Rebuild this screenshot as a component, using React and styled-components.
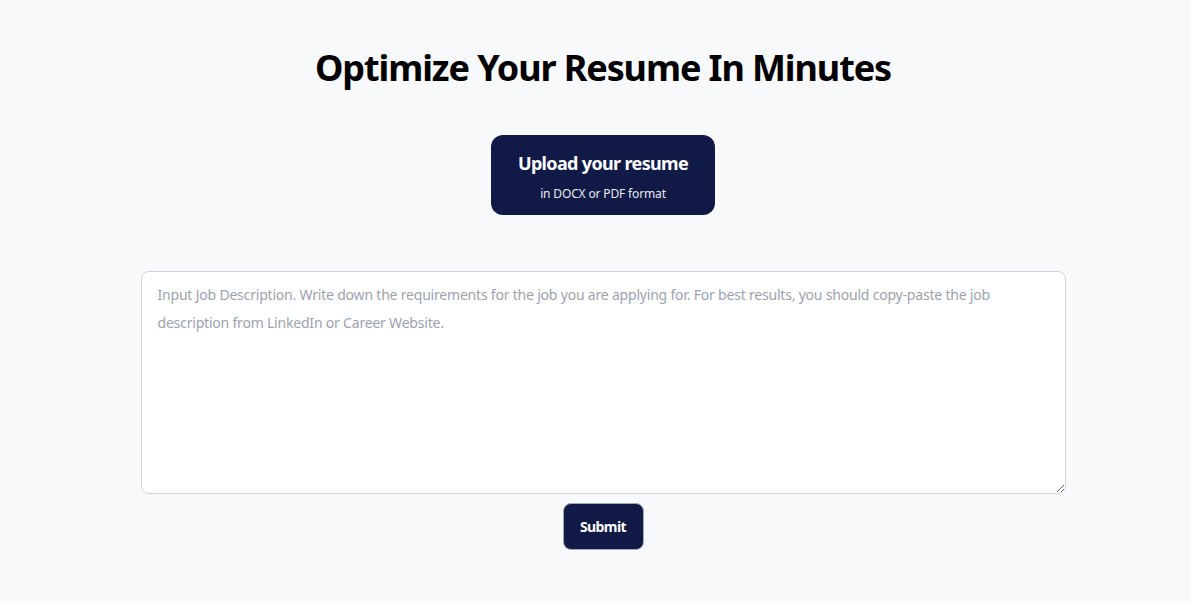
import React from "react";
import styled, { createGlobalStyle } from "styled-components";

const Global = createGlobalStyle`
  html, body { margin: 0; padding: 0; background: #f8f9fb; }
  body { font-family: "Noto Sans", "Open Sans", sans-serif; }
  * { box-sizing: border-box; }
`;

const Page = styled.main`
  display: flex;
  flex-direction: column;
  align-items: center;
  padding: 44px 0 40px 15px;
  min-height: 601px;
`;

const Title = styled.h1`
  margin: 0;
  font-size: 36px;
  line-height: 48px;
  font-weight: 700;
  color: #000;
  letter-spacing: -1.1px;
`;

const UploadButton = styled.button`
  margin-top: 43px;
  width: 224px;
  height: 80px;
  padding-top: 4px;
  border: none;
  border-radius: 12px;
  background: #111a46;
  color: #fff;
  font-family: inherit;
  display: flex;
  flex-direction: column;
  align-items: center;
  justify-content: center;
  gap: 12px;
  cursor: pointer;
`;

const UploadLabel = styled.span`
  font-size: 18px;
  font-weight: 700;
  line-height: 22px;
  letter-spacing: -0.65px;
`;

const UploadHint = styled.span`
  font-size: 12px;
  line-height: 16px;
  letter-spacing: -0.15px;
  color: #e6e8f0;
`;

const JobField = styled.textarea`
  margin-top: 56px;
  width: 925px;
  height: 223px;
  padding: 9px 16px;
  border: 1px solid #d1d5db;
  border-radius: 8px;
  background: #fff;
  font-family: inherit;
  font-size: 14px;
  line-height: 28px;
  letter-spacing: -0.2px;
  color: #111827;
  resize: vertical;
  outline: none;
  &::placeholder { color: #9ca3af; }
`;

const SubmitButton = styled.button`
  margin-top: 9px;
  width: 81px;
  height: 47px;
  border: 1px solid #a3a8b8;
  border-radius: 8px;
  background: #111a46;
  color: #fff;
  font-family: inherit;
  font-size: 14px;
  font-weight: 700;
  letter-spacing: -0.6px;
  cursor: pointer;
`;

export default function App() {
  return (
    <>
      <Global />
      <Page>
        <Title>Optimize Your Resume In Minutes</Title>
        <UploadButton type="button">
          <UploadLabel>Upload your resume</UploadLabel>
          <UploadHint>in DOCX or PDF format</UploadHint>
        </UploadButton>
        <JobField placeholder="Input Job Description. Write down the requirements for the job you are applying for. For best results, you should copy-paste the job description from LinkedIn or Career Website." />
        <SubmitButton type="button">Submit</SubmitButton>
      </Page>
    </>
  );
}
